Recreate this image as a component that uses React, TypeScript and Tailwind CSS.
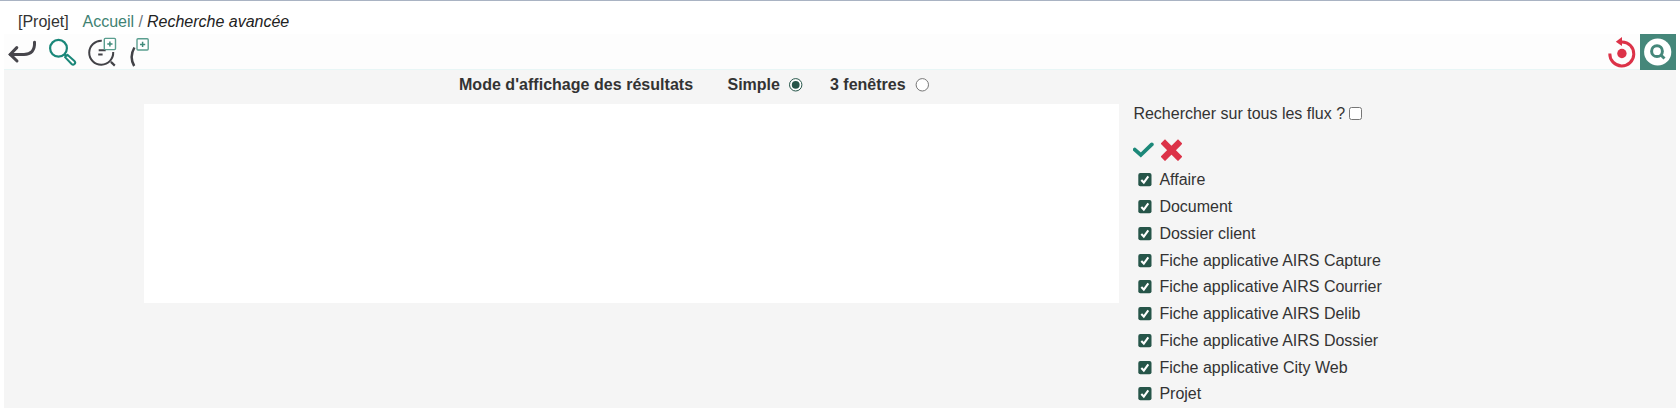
const flows = [
  'Affaire',
  'Document',
  'Dossier client',
  'Fiche applicative AIRS Capture',
  'Fiche applicative AIRS Courrier',
  'Fiche applicative AIRS Delib',
  'Fiche applicative AIRS Dossier',
  'Fiche applicative City Web',
  'Projet',
];

function CheckedBox() {
  return (
    <svg className="h-[14px] w-[14px] shrink-0" viewBox="0 0 14 14" role="img" aria-label="coché">
      <rect x="0.3" y="0" width="13.2" height="13.2" rx="2" fill="#265549" />
      <path d="M3.3 7L5.8 9.6L10.3 3.3" fill="none" stroke="#fff" strokeWidth="2.1" />
    </svg>
  );
}

function PlusBadge({ x, y }: { x: number; y: number }) {
  return (
    <g fill="none" stroke="#5a9e8f" strokeWidth="1.4">
      <rect x={x} y={y} width="11.2" height="11.2" rx="1" fill="#fff" />
      <path d={`M${x + 5.6} ${y + 3}v5.2M${x + 3} ${y + 5.6}h5.2`} strokeWidth="1.5" stroke="#3f8a7a" />
    </g>
  );
}

function Toolbar() {
  return (
    <div className="relative z-10 flex h-[35px] shrink-0 items-start justify-between bg-[#fdfdfd]">
      <div className="flex">
        <svg className="h-[35px] w-[36px]" viewBox="4 34 36 35" fill="none" stroke="#47464c">
          <path d="M34.5 42.2C35 50.5 31 54.4 24 54.4H10.5" strokeWidth="3" strokeLinecap="round" />
          <path d="M16.8 47.6L10.2 54.4L17 61" strokeWidth="3" strokeLinecap="round" />
        </svg>
        <svg className="h-[35px] w-[44px]" viewBox="40 34 44 35" fill="none" stroke="#1a8779" strokeWidth="2.2">
          <circle cx="58.5" cy="48.3" r="8.4" />
          <path d="M64.3 54.2L66.2 56" />
          <path d="M65 57.1L67.4 54.7L74.4 61Q76 62.6 74.5 64.1Q73 65.4 71.6 64Z" strokeLinejoin="round" strokeWidth="2" />
        </svg>
        <svg className="h-[35px] w-[40px]" viewBox="84 34 40 35" fill="none" stroke="#424247">
          <path d="M101.8 40.7A12 12 0 1 0 113.2 52" strokeWidth="2" />
          <path d="M98.7 50.2H105.7M98.2 54.4H102.6" strokeWidth="2" />
          <path d="M110.9 61.9L114.8 65.6" strokeWidth="2.2" />
          <PlusBadge x={104.3} y={38.4} />
        </svg>
        <svg className="h-[35px] w-[40px]" viewBox="124 34 40 35" fill="none" stroke="#424247" strokeWidth="2.5">
          <path d="M134.4 47.5Q129 57 134.2 66" />
          <PlusBadge x={137} y={38.8} />
        </svg>
      </div>
      <div className="flex">
        <svg className="h-[37px] w-[32px]" viewBox="1606 34 32 37" fill="none" stroke="#dc3248">
          <path d="M1609.8 53.5A12 12 0 1 0 1622 41.9H1619" strokeWidth="3" />
          <path d="M1615.8 41.7L1622 37L1622 46Z" fill="#dc3248" stroke="none" />
          <circle cx="1621.9" cy="53.5" r="4.7" fill="#dc3248" stroke="none" />
        </svg>
        <div className="ml-[2px] flex h-[36px] w-[36px] items-center justify-center bg-[#45877a]">
          <svg className="h-[28px] w-[28px]" viewBox="0 0 28 28" fill="none" stroke="#45877a">
            <circle cx="13.7" cy="14" r="13.6" fill="#fff" stroke="none" />
            <circle cx="13" cy="13.2" r="5.4" strokeWidth="3" />
            <path d="M16.8 17L20.5 20.5" strokeWidth="3" />
          </svg>
        </div>
      </div>
    </div>
  );
}

export default function App() {
  return (
    <div className="flex h-[408px] flex-col overflow-hidden border-t border-[#a9b3c3] bg-white font-['Liberation_Sans',Arial,sans-serif] text-[16px] leading-[20px] text-[#333]">
      <nav className="flex h-[33px] shrink-0 whitespace-pre pt-[11px] pl-[18px]">
        <span className="w-[64.5px]">[Projet]</span>
        <a className="text-[#3f8273]">Accueil</a>
        <span className="text-[#6c757d]"> / </span>
        <span className="-ml-[0.5px] italic text-[#222]">Recherche avancée</span>
      </nav>
      <div className="mr-[4px] ml-[4px] flex min-h-0 flex-1 flex-col">
        <Toolbar />
        <main className="min-h-0 flex-1 border-t border-[#e8f6f6] bg-[#f5f5f5]">
          <div className="flex h-[34px] items-start pt-[5px] pl-[455px] font-bold">
            <span className="w-[268.5px] whitespace-nowrap tracking-[0.03px]">Mode d'affichage des résultats</span>
            <label className="flex w-[102.5px] items-center whitespace-nowrap">
              <span className="w-[61.5px]">Simple</span>
              <svg className="h-[14px] w-[14px]" viewBox="0 0 14 14">
                <circle cx="6.7" cy="6.8" r="6.2" fill="#fff" stroke="#265549" strokeWidth="1" />
                <circle cx="6.7" cy="6.8" r="3.9" fill="#265549" />
              </svg>
            </label>
            <label className="flex items-center whitespace-nowrap">
              <span className="w-[85px]">3 fenêtres</span>
              <svg className="h-[14px] w-[14px]" viewBox="0 0 14 14">
                <circle cx="7.3" cy="6.8" r="6.2" fill="#fff" stroke="#767676" strokeWidth="1" />
              </svg>
            </label>
          </div>
          <div className="flex items-start pl-[139.5px]">
            <section className="h-[199px] w-[975px] shrink-0 bg-white" />
            <aside className="pl-[14.5px]">
              <label className="flex h-[20px] items-center whitespace-nowrap">
                <span className="w-[216px] pl-[0.4px]">Rechercher sur tous les flux ?</span>
                <span className="mb-[2px] h-[13px] w-[13px] rounded-[2.5px] border border-[#767676] bg-white" />
              </label>
              <div className="flex h-[42px] items-end gap-[7px] pb-[5px]">
                <svg className="h-[22px] w-[21px]" viewBox="0 0 21 22" fill="none">
                  <path d="M1.8 10.6L7.8 16L18.8 5.4" stroke="#1c8879" strokeWidth="3.8" strokeLinecap="round" />
                </svg>
                <svg className="h-[22px] w-[21px]" viewBox="0 0 21 22" fill="none">
                  <path d="M4 4.7L17 17.7M17 4.7L4 17.7" stroke="#dc3248" strokeWidth="6.2" strokeLinecap="square" />
                </svg>
              </div>
              <ul className="pt-[1px] pl-[5px]">
                {flows.map((flow) => (
                  <li key={flow} className="flex h-[26.75px] items-center gap-[7.4px] whitespace-nowrap">
                    <CheckedBox />
                    <span>{flow}</span>
                  </li>
                ))}
              </ul>
            </aside>
          </div>
        </main>
      </div>
    </div>
  );
}
